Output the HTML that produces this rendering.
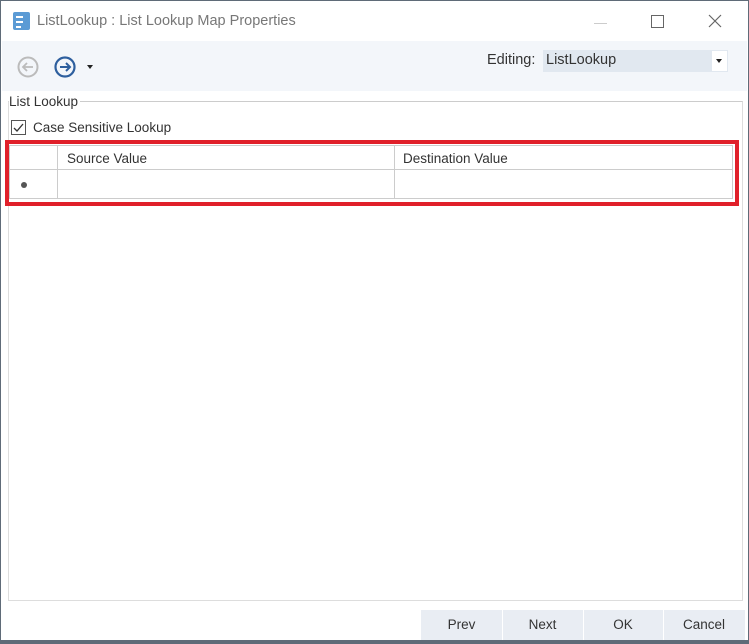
<!DOCTYPE html>
<html><head><style>
body{margin:0;width:749px;height:644px;background:#5f6b78;font-family:"Liberation Sans",sans-serif;overflow:hidden;position:relative}
.win{position:absolute;left:1px;top:1px;width:747px;height:639px;background:#fff}
.abs{position:absolute}
.t{font-size:13.5px;color:#333}
</style></head><body>
<div class="win" style="left:0;top:0;width:0;height:0"></div>
<div class="abs" style="left:1px;top:1px;width:747px;height:639px;background:#fff"></div>
<div class="abs" style="left:2px;top:2px;width:745px;height:638px">
<div class="abs" style="left:11px;top:10px;width:17px;height:18px;background:#5b9bd5;border-radius:2px"></div>
<div class="abs" style="left:14px;top:14px;width:7px;height:2px;background:#fff"></div>
<div class="abs" style="left:14px;top:19px;width:7px;height:2px;background:#fff"></div>
<div class="abs" style="left:14px;top:24px;width:5px;height:2px;background:#fff"></div>
<div class="abs t" style="left:35px;top:11px;font-size:14.5px;color:#777">ListLookup : List Lookup Map Properties</div>
<div class="abs" style="left:592px;top:21px;width:13px;height:1px;background:#ccc"></div>
<div class="abs" style="left:649px;top:13px;width:11px;height:11px;border:1px solid #666"></div>
<svg class="abs" style="left:706px;top:12px" width="14" height="14"><path d="M1 1L13 13M13 1L1 13" stroke="#666" stroke-width="1.2"/></svg>
<div class="abs" style="left:0;top:39px;width:745px;height:50px;background:#f3f6fa"></div>
<svg class="abs" style="left:14px;top:53px" width="24" height="24"><circle cx="12" cy="12" r="9.5" fill="none" stroke="#bbb" stroke-width="2"/><path d="M17 12H7M11 8L7 12L11 16" fill="none" stroke="#bbb" stroke-width="1.8"/></svg>
<svg class="abs" style="left:51px;top:53px" width="24" height="24"><circle cx="12" cy="12" r="9.5" fill="none" stroke="#2e5f9e" stroke-width="2.2"/><path d="M7 12H17M13 8L17 12L13 16" fill="none" stroke="#2e5f9e" stroke-width="2"/></svg>
<div class="abs" style="left:85px;top:63px;border:3px solid transparent;border-top:4px solid #222"></div>
<div class="abs t" style="left:485px;top:50px;font-size:14.5px">Editing:</div>
<div class="abs" style="left:541px;top:48px;width:185px;height:22px;background:#e1e8f0"></div>
<div class="abs" style="left:710px;top:49px;width:15px;height:20px;background:#fff"></div>
<div class="abs" style="left:714px;top:57px;border:3px solid transparent;border-top:4px solid #222"></div>
<div class="abs t" style="left:544px;top:50px;font-size:14.5px">ListLookup</div>
<div class="abs" style="left:6px;top:99px;width:733px;height:498px;border:1px solid #ddd;border-top-color:#ccc"></div>
<div class="abs t" style="left:7px;top:92px;background:#fff;padding-right:2px">List Lookup</div>
<div class="abs" style="left:9px;top:118px;width:13px;height:13px;border:1px solid #555"></div>
<svg class="abs" style="left:10px;top:119px" width="13" height="13"><path d="M2 7L5 10L11 3" fill="none" stroke="#333" stroke-width="1.3"/></svg>
<div class="abs t" style="left:31px;top:118px">Case Sensitive Lookup</div>
<div class="abs" style="left:3px;top:138px;width:726px;height:58px;border:4px solid #e0202a"></div>
<div class="abs" style="left:7px;top:143px;width:722px;height:52px;border:1px solid #ccc;background:#fff"></div>
<div class="abs" style="left:8px;top:167px;width:722px;height:1px;background:#ccc"></div>
<div class="abs" style="left:55px;top:144px;width:1px;height:52px;background:#ccc"></div>
<div class="abs" style="left:392px;top:144px;width:1px;height:52px;background:#ccc"></div>
<div class="abs t" style="left:65px;top:149px">Source Value</div>
<div class="abs t" style="left:401px;top:149px">Destination Value</div>
<div class="abs" style="left:19px;top:180px;width:6px;height:6px;border-radius:50%;background:#555"></div>
<div class="abs" style="left:419px;top:608px;width:324px;height:30px;background:#e9edf3"></div>
<div class="abs" style="left:500px;top:608px;width:1px;height:30px;background:#fff"></div>
<div class="abs" style="left:581px;top:608px;width:1px;height:30px;background:#fff"></div>
<div class="abs" style="left:661px;top:608px;width:1px;height:30px;background:#fff"></div>
<div class="abs t" style="left:419px;top:615px;width:81px;text-align:center">Prev</div>
<div class="abs t" style="left:500px;top:615px;width:81px;text-align:center">Next</div>
<div class="abs t" style="left:581px;top:615px;width:80px;text-align:center">OK</div>
<div class="abs t" style="left:661px;top:615px;width:82px;text-align:center">Cancel</div>
</div>
</body></html>
